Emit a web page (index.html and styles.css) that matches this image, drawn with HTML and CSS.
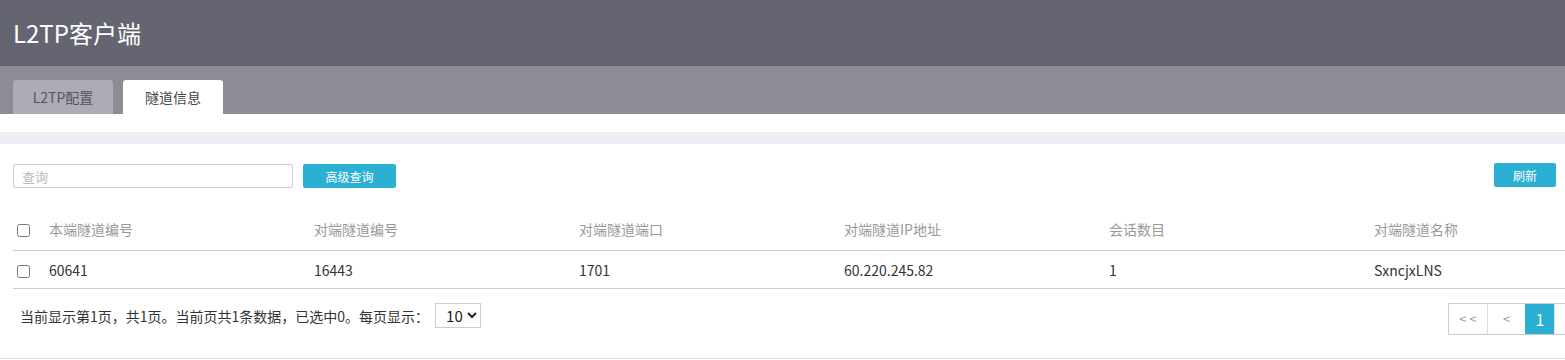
FILE: index.html
```html
<!DOCTYPE html>
<html lang="zh-CN">

<head>
    <meta charset="UTF-8">
    <meta name="viewport" content="width=device-width, initial-scale=1.0">
    <title>L2TP客户端</title>
    <link rel="stylesheet" href="styles.css">
</head>

<body>

    <div class="page-title">L2TP客户端</div>

    <div class="tab-bar">
        <div class="tab">L2TP配置</div>
        <div class="tab active">隧道信息</div>
    </div>

    <div class="band"></div>

    <div class="panel">
        <!-- search + buttons -->
        <div class="toolbar">
            <input type="text" class="search" placeholder="查询">
            <button class="btn">高级查询</button>
            <button class="btn refresh">刷新</button>
        </div>

        <div class="grid">
            <table class="tunnels">
                <thead>
                    <tr>
                        <th class="col-check"><input type="checkbox"></th>
                        <th>本端隧道编号</th>
                        <th>对端隧道编号</th>
                        <th>对端隧道端口</th>
                        <th>对端隧道IP地址</th>
                        <th>会话数目</th>
                        <th>对端隧道名称</th>
                    </tr>
                </thead>
                <tbody>
                    <tr>
                        <td class="col-check"><input type="checkbox"></td>
                        <td>60641</td>
                        <td>16443</td>
                        <td>1701</td>
                        <td>60.220.245.82</td>
                        <td>1</td>
                        <td>SxncjxLNS</td>
                    </tr>
                </tbody>
            </table>

            <div class="footer">
                <div class="info">
                    当前显示第1页，共1页。当前页共1条数据，已选中0。每页显示：
                    <select class="page-size">
                        <option>10</option>
                        <option>20</option>
                        <option>50</option>
                    </select>
                </div>
                <div class="pager">
                    <a class="wide">&lt; &lt;</a>
                    <a>&lt;</a>
                    <a class="current">1</a>
                    <!-- next / last buttons run past the right edge -->
                    <a class="more"></a>
                </div>
            </div>
        </div>
    </div>

</body>

</html>
```

FILE: styles.css
```css
html {
    overflow: hidden;
}

body {
    margin: 0;
    font-family: "Noto Sans CJK SC", "Noto Sans", sans-serif;
    font-size: 14px;
    color: #333;
    background: #fff;
}

.page-title {
    height: 66px;
    line-height: 66px;
    padding-left: 13px;
    background-color: #656572;
    color: #fff;
    font-size: 24px;
}

.tab-bar {
    height: 48px;
    box-sizing: border-box;
    padding: 14px 13px 0;
    display: flex;
    align-items: flex-end;
    gap: 10px;
    background-color: #8d8b96;
}

.tab {
    width: 100px;
    height: 34px;
    line-height: 34px;
    text-align: center;
    border-radius: 3px 3px 0 0;
    background-color: #adabb6;
    color: #555;
}

.tab.active {
    background-color: #fff;
    color: #444;
}

.band {
    margin-top: 18px;
    height: 12px;
    background-color: #eeeef6;
}

.panel {
    padding: 0 9px 0 13px;
    border-bottom: 1px solid #ddd;
}

.toolbar {
    margin-top: 20px;
    display: flex;
    align-items: flex-start;
    gap: 10px;
}

.search {
    width: 280px;
    height: 24px;
    box-sizing: border-box;
    border: 1px solid #ccc;
    border-radius: 2px;
    padding: 0 8px;
    font-family: inherit;
    font-size: 13px;
    outline: none;
}

.search::placeholder {
    color: #bbb;
}

.btn {
    width: 93px;
    height: 24px;
    border: none;
    border-radius: 2px;
    background-color: #2bafd2;
    color: #fff;
    font-family: inherit;
    font-size: 12px;
    padding: 0;
}

.refresh {
    width: 62px;
    margin-left: auto;
    margin-top: -1px;
}

.grid {
    width: 1617px;
    margin-top: 19px;
}

table {
    width: 100%;
    border-collapse: collapse;
    table-layout: fixed;
}

th,
td {
    text-align: left;
    font-weight: normal;
    padding: 0 0 0 9px;
    border-bottom: 1px solid #ccc;
    white-space: nowrap;
}

th {
    height: 43px;
    color: #999;
}

td {
    height: 37px;
    color: #333;
}

.tunnels .col-check {
    width: 23px;
    padding-left: 4px;
}

input[type="checkbox"] {
    margin: 0;
    width: 13px;
    height: 13px;
    vertical-align: middle;
}

.footer {
    height: 69px;
    box-sizing: border-box;
    padding-top: 14px;
    display: flex;
    justify-content: space-between;
    align-items: flex-start;
}

.info {
    padding-left: 7px;
    display: flex;
    align-items: center;
    gap: 6px;
    height: 25px;
}

.page-size {
    width: 46px;
    height: 25px;
    border: 1px solid #ccc;
    border-radius: 0;
    background: #fff;
    font-family: inherit;
    font-size: 15px;
    color: #222;
    padding: 0 0 0 6px;
}

.pager {
    display: flex;
    border: 1px solid #ccc;
    margin-right: -2px;
}

.pager a {
    width: 37px;
    height: 30px;
    line-height: 30px;
    text-align: center;
    color: #999;
    font-size: 13px;
    border-left: 1px solid #e0e0e0;
}

.pager a.wide {
    width: 38px;
}

.pager a:first-child {
    border-left: none;
}

.pager a.current {
    width: 28px;
    background-color: #2bafd2;
    color: #fff;
    font-size: 16px;
    border-left-color: #2bafd2;
}

.pager a.more {
    width: 76px;
}
```
